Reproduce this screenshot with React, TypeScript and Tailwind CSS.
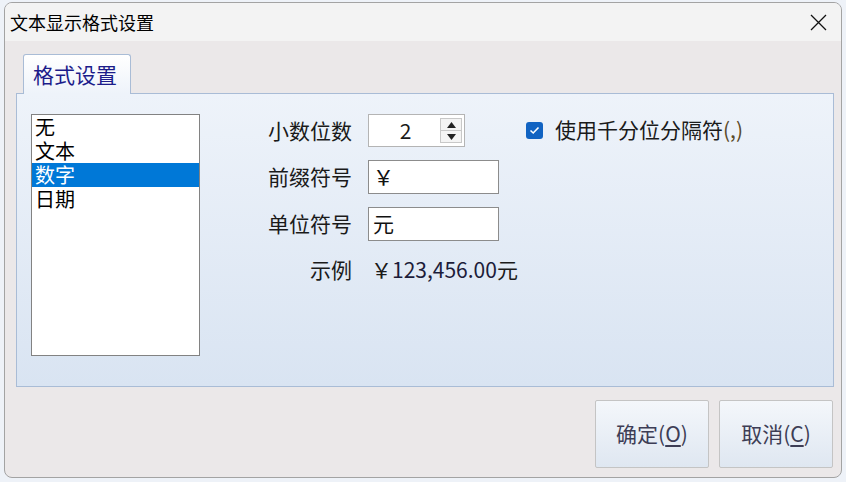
const FONT = "font-['Microsoft_YaHei','Noto_Sans_CJK_SC',sans-serif]";

const items = ["无", "文本", "数字", "日期"];

function Spinner() {
  return (
    <div className="flex h-[33px] w-[97px] border border-[#b4b4b4] bg-white">
      <div className="flex flex-1 items-center justify-center pl-[2px] text-[21px] text-[#1a1a1a]">2</div>
      <div className="my-[3px] mr-[2px] flex w-[22px] flex-col border border-[#c8c8c8] bg-[#f4f4f4]">
        <div className="flex flex-1 items-center justify-center border-b border-[#c8c8c8]">
          <svg width="9" height="6" viewBox="0 0 9 6">
            <path d="M0 6 L4.5 0 L9 6 Z" fill="#222" />
          </svg>
        </div>
        <div className="flex flex-1 items-center justify-center">
          <svg width="9" height="6" viewBox="0 0 9 6">
            <path d="M0 0 L4.5 6 L9 0 Z" fill="#222" />
          </svg>
        </div>
      </div>
    </div>
  );
}

function TextBox({ value }: { value: string }) {
  return (
    <div className="flex h-[34px] w-[131px] items-center border border-[#8c8c8c] bg-white pl-[4px] text-[21px] text-[#111]">
      {value}
    </div>
  );
}

function DlgButton({ label, hotkey }: { label: string; hotkey: string }) {
  return (
    <button className="flex h-[68px] w-[114px] items-center justify-center rounded-[2px] border border-[#c4c4c4] bg-gradient-to-b from-[#f4f7fb] to-[#dfe7f1] text-[21px] text-[#3d3d55]">
      {label}(<span className="underline underline-offset-[3px]">{hotkey}</span>)
    </button>
  );
}

export default function App() {
  return (
    <div className={`h-[482px] w-[846px] overflow-hidden bg-[#eef2f8] pl-[4px] pt-[2px] ${FONT}`}>
      <div className="flex h-[476px] w-[838px] flex-col overflow-hidden rounded-[8px] border border-[#a3a3a3] bg-[#ebe8e9]">
        <div className="flex h-[38px] shrink-0 items-center justify-between bg-[#f3f3f3] pl-[5px] pr-[14px]">
          <span className="text-[18px] text-black">文本显示格式设置</span>
          <svg width="17" height="17" viewBox="0 0 17 17">
            <path d="M1 1 L16 16 M16 1 L1 16" stroke="#111" strokeWidth="1.3" />
          </svg>
        </div>

        <div className="flex flex-1 flex-col pl-[11px] pr-[7px] pt-[13px]">
          <div className="relative z-10 -mb-px ml-[7px] flex h-[40px] w-[108px] items-center rounded-t-[3px] border border-b-0 border-[#a9bcd6] bg-gradient-to-b from-white to-[#eef3fa] pl-[9px] text-[21px] text-[#1c1c8a]">
            格式设置
          </div>
          <div className="flex h-[294px] border border-[#a9bcd6] bg-gradient-to-b from-[#eef3fa] to-[#d9e4f2] pl-[14px] pt-[20px]">
            <div className="h-[242px] w-[169px] border border-[#828282] bg-white">
              {items.map((it) => (
                <div
                  key={it}
                  className={`flex h-[24px] items-center pl-[3px] text-[20px] leading-none ${
                    it === "数字" ? "bg-[#0078d7] text-white" : "text-black"
                  }`}
                >
                  {it}
                </div>
              ))}
            </div>

            <div className="grid grid-cols-[152px_131px] content-start gap-x-[16px] gap-y-[13px] text-[21px] text-[#1a1a1a]">
              <span className="flex items-center justify-end">小数位数</span>
              <Spinner />
              <span className="flex items-center justify-end">前缀符号</span>
              <TextBox value="￥" />
              <span className="flex items-center justify-end">单位符号</span>
              <TextBox value="元" />
              <span className="flex items-center justify-end">示例</span>
              <span className="whitespace-nowrap pl-[3px]">
                ￥<span className="text-[#1c1c3a]">123,456.00</span>元
              </span>
            </div>

            <div className="ml-[27px] flex h-[32px] items-center gap-[12px]">
              <span className="flex h-[17px] w-[17px] items-center justify-center rounded-[3px] bg-[#1163c2]">
                <svg width="11" height="9" viewBox="0 0 11 9">
                  <path d="M1.5 4.5 L4.2 7 L9.5 1.5" fill="none" stroke="white" strokeWidth="1.6" />
                </svg>
              </span>
              <span className="text-[21px] text-[#1a1a1a]">
                使用千分位分隔符<span className="text-[#5a4a2a]">(,)</span>
              </span>
            </div>
          </div>

          <div className="mt-[13px] flex justify-end gap-[10px] pr-[1px]">
            <DlgButton label="确定" hotkey="O" />
            <DlgButton label="取消" hotkey="C" />
          </div>
        </div>
      </div>
    </div>
  );
}
